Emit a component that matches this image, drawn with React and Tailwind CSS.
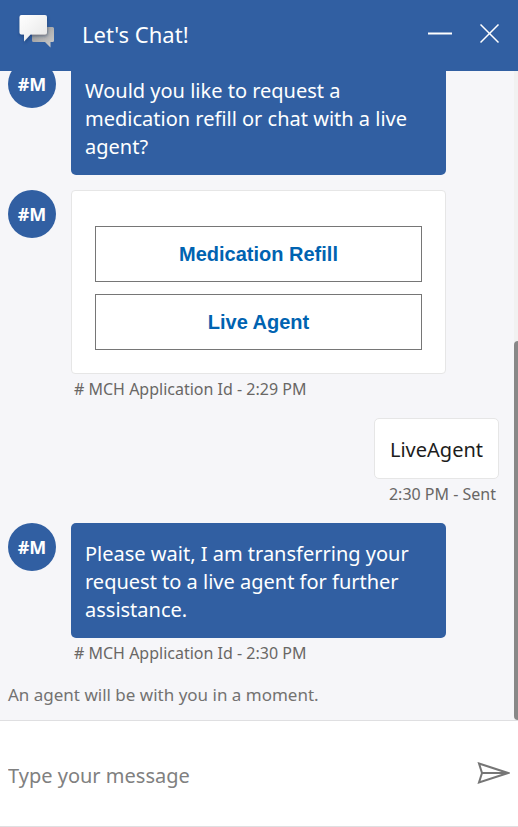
import React from "react";

function ChatLogo() {
  return (
    <svg viewBox="0 -2 48 48" className="h-12 w-12" aria-hidden="true">
      <defs>
        <linearGradient id="front" x1="0" y1="0" x2="1" y2="1">
          <stop offset="0" stopColor="#ffffff" />
          <stop offset="1" stopColor="#e6e6e6" />
        </linearGradient>
        <linearGradient id="back" x1="0" y1="0" x2="1" y2="1">
          <stop offset="0" stopColor="#8f8f8f" />
          <stop offset="1" stopColor="#d0d0d0" />
        </linearGradient>
        <filter id="shade" x="-30%" y="-30%" width="160%" height="170%">
          <feDropShadow dx="0.5" dy="1.5" stdDeviation="1.8" floodColor="#0d2a55" floodOpacity="0.5" />
        </filter>
      </defs>
      <path
        d="M21 15H40.500a1.500 1.500 0 0 1 1.500 1.500V28.500a1.500 1.500 0 0 1-1.500 1.500H38.500V35.500L33 30H21.500a1.500 1.500 0 0 1-1.500-1.500V16a1 1 0 0 1 1-1Z"
        fill="url(#back)"
      />
      <path
        d="M9.500 3H33a2 2 0 0 1 2 2V20.500a2 2 0 0 1-2 2H18.500L12 29.500V22.500H9.500a2 2 0 0 1-2-2V5a2 2 0 0 1 2-2Z"
        fill="url(#front)"
        filter="url(#shade)"
      />
    </svg>
  );
}

function Avatar() {
  return (
    <div className="flex h-12 w-12 shrink-0 items-center justify-center rounded-full bg-[#315fa2] text-lg font-bold text-white">
      #M
    </div>
  );
}

function BotMessage({ children, meta }) {
  return (
    <div className="flex gap-[15px] pr-[68px] pl-2">
      <Avatar />
      <div className="min-w-0 flex-1">
        {children}
        {meta && <p className="px-[3px] pt-[3px] text-base leading-6 text-[#696765]">{meta}</p>}
      </div>
    </div>
  );
}

function Bubble({ children }) {
  return (
    <div className="rounded-[5px] bg-[#315fa2] px-[14px] pt-[17px] pb-[14px] text-xl leading-7 text-white">
      {children}
    </div>
  );
}

function Choice({ children }) {
  return (
    <button
      type="button"
      className="h-14 w-full border border-[#767676] bg-white font-['Liberation_Sans',Arial,sans-serif] text-xl font-bold text-[#0063b1]"
    >
      {children}
    </button>
  );
}

export default function App() {
  return (
    <div className="flex h-screen flex-col bg-[#f6f6f9] font-['Noto_Sans','Open_Sans',sans-serif]">
      <header className="flex h-[71px] shrink-0 items-center bg-[#315fa2] px-3 pb-1 text-white">
        <ChatLogo />
        <h1 className="ml-[22px] flex-1 text-[22px] leading-8">Let's Chat!</h1>
        <button type="button" aria-label="Minimize" className="flex h-8 w-8 items-center justify-center">
          <svg viewBox="0 0 24 24" className="h-6 w-6" aria-hidden="true">
            <path d="M0 11.500H24" stroke="currentColor" strokeWidth="2" />
          </svg>
        </button>
        <button type="button" aria-label="Close" className="ml-[18px] flex h-8 w-8 items-center justify-center">
          <svg viewBox="0 0 20 20" className="h-5 w-5" aria-hidden="true">
            <path d="M0.500 0.500L18.500 18.500M18.500 0.500L0.500 18.500" stroke="currentColor" strokeWidth="1.500" />
          </svg>
        </button>
      </header>

      <div className="flex min-h-0 flex-1">
        <main className="flex min-w-0 flex-1 flex-col justify-end overflow-hidden pb-[13px]">
          <BotMessage>
            <Bubble>Would you like to request a medication refill or chat with a live agent?</Bubble>
          </BotMessage>

          <div className="mt-[15px]">
            <BotMessage meta="# MCH Application Id - 2:29 PM">
              <div className="flex flex-col gap-3 rounded-[4px] border border-[#e6e6e6] bg-white px-[23px] pt-[35px] pb-[23px]">
                <Choice>Medication Refill</Choice>
                <Choice>Live Agent</Choice>
              </div>
            </BotMessage>
          </div>

          <div className="mt-[17px] flex flex-col items-end pr-[15px]">
            <p className="rounded-[5px] border border-[#e6e6e6] bg-white px-[15px] pt-[17px] pb-[14px] text-xl leading-7 text-[#1c1c1c]">
              LiveAgent
            </p>
            <p className="px-[3px] pt-[3px] text-base leading-6 text-[#696765]">2:30 PM - Sent</p>
          </div>

          <div className="mt-[17px]">
            <BotMessage meta="# MCH Application Id - 2:30 PM">
              <Bubble>Please wait, I am transferring your request to a live agent for further assistance.</Bubble>
            </BotMessage>
          </div>

          <p className="mt-[18px] px-2 text-[17px] leading-6 text-[#737271]">
            An agent will be with you in a moment.
          </p>
        </main>
        <div className="flex w-1 shrink-0 flex-col justify-end bg-[#f1f1f1]" aria-hidden="true">
          <div className="h-7/12 rounded-l-full bg-[#888888]" />
        </div>
      </div>

      <form
        className="flex h-[107px] shrink-0 items-center border-y border-[#dfdfe1] bg-white px-2"
        onSubmit={(e) => e.preventDefault()}
      >
        <input
          type="text"
          aria-label="Type your message"
          placeholder="Type your message"
          className="min-w-0 flex-1 pt-1 text-xl text-black outline-none placeholder:text-[#808080]"
        />
        <button type="submit" aria-label="Send" className="text-[#767676]">
          <svg viewBox="0 0 33 24" className="h-6 w-[33px]" fill="none" aria-hidden="true">
            <path d="M2 1.500L31 11L2 20.500L5 11ZM5 11H31" stroke="currentColor" strokeWidth="2" />
          </svg>
        </button>
      </form>
    </div>
  );
}
